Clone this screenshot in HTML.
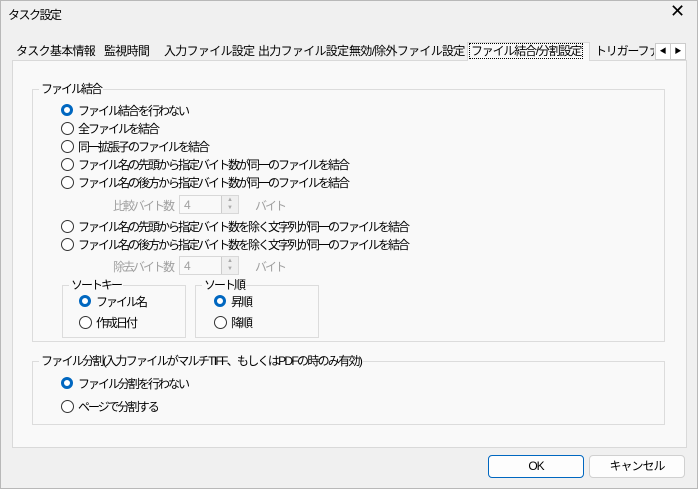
<!DOCTYPE html>
<html><head><meta charset="utf-8"><style>
body{margin:0;width:698px;height:489px;background:#f0f0f0;font-family:"Liberation Sans","Noto Sans CJK JP",sans-serif;font-size:12px;color:#000;position:relative;overflow:hidden;letter-spacing:-2px}
.a{position:absolute;white-space:nowrap}
.win{position:absolute;left:0;top:0;width:696px;height:487px;border:1px solid #b8b8b8;background:#f0f0f0}
.panel{position:absolute;left:12px;top:60px;width:673px;height:386px;background:#f9f9f9;border:1px solid #d9d9d9}
.tab{position:absolute;top:43px;height:17px;line-height:17px;font-size:12px;letter-spacing:-0.7px;white-space:nowrap}
.grp{position:absolute;border:1px solid #dcdcdc}
.gl{position:absolute;top:-8px;left:6px;background:#f9f9f9;padding:0 2px;line-height:14px;white-space:nowrap}
.r{position:absolute;height:16px;line-height:16px;padding-left:16px;white-space:nowrap}
.r:before{content:"";position:absolute;left:-1px;top:1px;width:11px;height:11px;border:1px solid #333;border-radius:50%;background:#fff}
.r.on:before{border:3.5px solid #0067c0;width:6px;height:6px;background:#fff}
.dis{color:#a0a0a0}
.spin{position:absolute;width:60px;height:19px;border:1px solid #d8d8d8;background:#f9f9f9;color:#a0a0a0;line-height:19px;padding-left:4px;box-sizing:border-box;letter-spacing:0}
.spin i{position:absolute;right:0;top:0;width:16px;height:17px;border-left:1px solid #ccc;background:#efefef;font-style:normal;font-size:6px;text-align:center;line-height:8px;color:#aaa}
.btn{position:absolute;top:455px;width:94px;height:21px;border:1px solid #d0d0d0;border-radius:4px;background:#fdfdfd;text-align:center;line-height:21px;letter-spacing:-1px}
</style></head><body>
<div class="win"></div>
<div class="a" style="left:8px;top:6px;letter-spacing:-1.5px">タスク設定</div>
<div class="a" style="left:670px;top:1px;font-size:18px;font-weight:200">✕</div>
<div class="panel"></div>
<div class="tab" style="left:16px">タスク基本情報</div>
<div class="tab" style="left:104px">監視時間</div>
<div class="tab" style="left:164px">入力ファイル設定</div>
<div class="tab" style="left:258px">出力ファイル設定</div>
<div class="tab" style="left:349px">無効/除外ファイル設定</div>
<div class="tab" style="left:467px;top:42px;height:18px;background:#f9f9f9;border:1px solid #d9d9d9;border-bottom:none;width:121px;letter-spacing:-1.2px"><span style="outline:1px dotted #000;padding:0 1px;margin-left:2px">ファイル結合/分割設定</span></div>
<div class="tab" style="left:595px;width:59px;overflow:hidden;letter-spacing:-1.2px">トリガーファイル</div>
<div class="a" style="left:655px;top:43px;width:14px;height:15px;border:1px solid #ccc;background:#fff;font-size:7px;text-align:center;line-height:15px;letter-spacing:0">◀</div>
<div class="a" style="left:670px;top:43px;width:14px;height:15px;border:1px solid #ccc;background:#fff;font-size:7px;text-align:center;line-height:15px;letter-spacing:0">▶</div>

<div class="grp" style="left:32px;top:89px;width:631px;height:251px"><div class="gl">ファイル結合</div></div>
<div class="r on" style="left:62px;top:103px">ファイル結合を行わない</div>
<div class="r" style="left:62px;top:121px">全ファイルを結合</div>
<div class="r" style="left:62px;top:139px">同一拡張子のファイルを結合</div>
<div class="r" style="left:62px;top:157px">ファイル名の先頭から指定バイト数が同一のファイルを結合</div>
<div class="r" style="left:62px;top:175px">ファイル名の後方から指定バイト数が同一のファイルを結合</div>
<div class="a dis" style="left:113px;top:197px">比較バイト数</div>
<div class="spin" style="left:179px;top:195px">4<i>▲<br>▼</i></div>
<div class="a dis" style="left:255px;top:197px">バイト</div>
<div class="r" style="left:62px;top:219px">ファイル名の先頭から指定バイト数を除く文字列が同一のファイルを結合</div>
<div class="r" style="left:62px;top:237px">ファイル名の後方から指定バイト数を除く文字列が同一のファイルを結合</div>
<div class="a dis" style="left:113px;top:258px">除去バイト数</div>
<div class="spin" style="left:179px;top:256px">4<i>▲<br>▼</i></div>
<div class="a dis" style="left:255px;top:258px">バイト</div>

<div class="grp" style="left:62px;top:285px;width:122px;height:51px"><div class="gl">ソートキー</div></div>
<div class="r on" style="left:80px;top:294px">ファイル名</div>
<div class="r" style="left:80px;top:315px">作成日付</div>
<div class="grp" style="left:195px;top:285px;width:122px;height:51px"><div class="gl">ソート順</div></div>
<div class="r on" style="left:215px;top:294px">昇順</div>
<div class="r" style="left:215px;top:315px">降順</div>

<div class="grp" style="left:32px;top:361px;width:631px;height:62px"><div class="gl" style="letter-spacing:-1.7px">ファイル分割(入力ファイルがマルチTIFF、もしくはPDFの時のみ有効)</div></div>
<div class="r on" style="left:62px;top:376px">ファイル分割を行わない</div>
<div class="r" style="left:62px;top:399px">ページで分割する</div>

<div class="btn" style="left:488px;border:1px solid #0067c0">OK</div>
<div class="btn" style="left:589px">キャンセル</div>
</body></html>
